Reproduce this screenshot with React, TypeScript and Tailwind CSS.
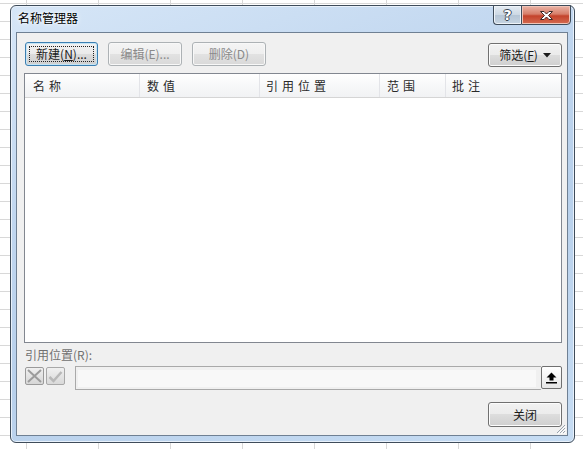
import React from "react";

const F = "font-['Microsoft_YaHei','Noto_Sans_CJK_SC',sans-serif]";

function Btn({
  children,
  w,
  h = "h-[24px]",
  kind = "normal",
}: {
  children: React.ReactNode;
  w: string;
  h?: string;
  kind?: "normal" | "default" | "disabled";
}) {
  const border =
    kind === "default"
      ? "border-[#3c7fb1] shadow-[inset_0_0_0_1px_#c4e5f6]"
      : kind === "disabled"
      ? "border-[#adb2b5] shadow-[inset_0_0_0_1px_#f8f8f8]"
      : "border-[#707070] shadow-[inset_0_0_0_1px_#fcfcfc]";
  const bg =
    kind === "default"
      ? "bg-[linear-gradient(to_bottom,#f2f2f2_0%,#eaeaea_50%,#dcdcdc_50%,#cfcfcf_100%)]"
      : kind === "disabled"
      ? "bg-[linear-gradient(to_bottom,#f4f4f4_0%,#efefef_50%,#e2e2e2_50%,#d9d9d9_100%)]"
      : "bg-[linear-gradient(to_bottom,#f2f2f2_0%,#ebebeb_50%,#dddddd_50%,#cfcfcf_100%)]";
  const text = kind === "disabled" ? "text-[#8a8a8a]" : "text-[#1a1a1a]";
  return (
    <div
      className={`${w} ${h} relative flex items-center justify-center rounded-[3px] border ${border} ${bg} ${text} text-[12px] leading-none`}
    >
      {kind === "default" && (
        <span className="absolute inset-[3px] border border-dotted border-[#222]" />
      )}
      <span className="relative">{children}</span>
    </div>
  );
}

export default function App() {
  return (
    <div
      className={`w-[583px] h-[449px] overflow-hidden bg-white bg-[linear-gradient(to_right,#d8d8d8_1px,transparent_1px),linear-gradient(to_bottom,#d8d8d8_1px,transparent_1px)] bg-size-[72px_18px] bg-position-[26px_3px] pt-[5px] pl-[10px] ${F}`}
    >
      {/* window */}
      <div className="w-[565px] h-[438px] rounded-[6px] border border-[#3f4c5a] bg-[linear-gradient(160deg,#d6e6f7_0%,#c0d6ef_35%,#b8d0eb_60%,#c6dcf3_100%)] shadow-[inset_0_0_0_1px_#e8f1fb] pl-[5px] pr-[6px] pb-[6px] flex flex-col">
        {/* title bar */}
        <div className="h-[26px] flex items-start justify-between">
          <div className="pl-[2px] pt-[4px] text-[12px] leading-[16px] text-black [text-shadow:0_0_6px_#ffffff,0_0_3px_#ffffff]">
            名称管理器
          </div>
          <div className="flex -mt-[1px] -mr-[3px]">
            <div className="w-[28px] h-[20px] rounded-bl-[4px] border border-[#3f4c5a] border-r-0 bg-[linear-gradient(to_bottom,#e4ebf2_0%,#ccd8e4_50%,#b5c5d5_50%,#c6d4e2_100%)] shadow-[inset_0_0_0_1px_#eef3f8] flex items-center justify-center">
              <span className="text-[14px] font-bold leading-none text-white [font-family:'DejaVu_Sans',sans-serif] [text-shadow:1px_0_0_#3a4654,-1px_0_0_#3a4654,0_1px_0_#3a4654,0_-1px_0_#3a4654]">
                ?
              </span>
            </div>
            <div className="w-[50px] h-[20px] rounded-br-[4px] border border-[#3f4c5a] bg-[linear-gradient(to_bottom,#eab5a8_0%,#d77e69_45%,#c4432b_55%,#d46b52_100%)] shadow-[inset_0_0_0_1px_#f0c4b8] flex items-center justify-center">
              <svg width="15" height="11" viewBox="0 0 15 11">
                <path
                  d="M1.5 1.5 H5 L7.5 4 L10 1.5 H13.5 L9.5 5.5 L13.5 9.5 H10 L7.5 7 L5 9.5 H1.5 L5.5 5.5 Z"
                  fill="#ffffff"
                  stroke="#3b2a28"
                  strokeWidth="1"
                  strokeLinejoin="round"
                />
              </svg>
            </div>
          </div>
        </div>

        {/* client area */}
        <div className="flex-1 relative border border-[#6f8093] bg-[#f0f0f0] flex flex-col pl-[7px] pr-[5px]">
          {/* buttons row */}
          <div className="mt-[9px] pl-[1px] flex items-start">
            <Btn w="w-[73px]" kind="default">
              新建(<u>N</u>)...
            </Btn>
            <div className="ml-[10px]">
              <Btn w="w-[74px]" kind="disabled">
                编辑(E)...
              </Btn>
            </div>
            <div className="ml-[10px]">
              <Btn w="w-[74px]" kind="disabled">
                删除(D)
              </Btn>
            </div>
            <div className="ml-auto mt-[1px]">
              <Btn w="w-[74px]">
                <span className="flex items-center gap-[5px]">
                  <span>
                    筛选(<u>F</u>)
                  </span>
                  <svg width="8" height="5" viewBox="0 0 8 5">
                    <path d="M0 0 H8 L4 4.5 Z" fill="#1a1a1a" />
                  </svg>
                </span>
              </Btn>
            </div>
          </div>

          {/* list */}
          <div className="mt-[6px] h-[270px] border border-[#828790] bg-white">
            <div className="h-[24px] flex border-b border-[#d5d5d5] bg-[linear-gradient(to_bottom,#ffffff_0%,#f7f8f9_50%,#f1f2f4_100%)] text-[12px] text-[#2a2a2a] tracking-[4px]">
              <div className="w-[115px] border-r border-[#e3e4e8] flex items-center pl-[8px]">名称</div>
              <div className="w-[120px] border-r border-[#e3e4e8] flex items-center pl-[7px]">数值</div>
              <div className="w-[120px] border-r border-[#e3e4e8] flex items-center pl-[6px]">引用位置</div>
              <div className="w-[66px] border-r border-[#e3e4e8] flex items-center pl-[7px]">范围</div>
              <div className="flex-1 flex items-center pl-[6px]">批注</div>
            </div>
          </div>

          {/* reference label */}
          <div className="mt-[4px] pl-[1px] h-[16px] text-[12px] leading-[16px] text-[#707070]">
            引用位置(R):
          </div>

          {/* reference row */}
          <div className="mt-[3px] h-[24px] flex items-start pl-[1px]">
            <div className="mt-[1px] w-[19px] h-[18px] rounded-[2px] border border-[#9a9a9a] bg-[linear-gradient(to_bottom,#f0f0f0,#d6d6d6)] flex items-center justify-center">
              <svg width="15" height="14" viewBox="0 0 15 14">
                <path d="M1 1 L14 13 M14 1 L1 13" stroke="#9c9c9c" strokeWidth="2" />
              </svg>
            </div>
            <div className="ml-[2px] mt-[1px] w-[19px] h-[18px] rounded-[2px] border border-[#a8a8a8] bg-[linear-gradient(to_bottom,#f0f0f0,#d9d9d9)] flex items-center justify-center">
              <svg width="15" height="13" viewBox="0 0 15 13">
                <path d="M1.5 7 L5.5 11 L13.5 2" stroke="#b8b8b8" strokeWidth="2.5" fill="none" />
              </svg>
            </div>
            <div className="ml-[10px] flex-1 h-[24px] flex items-stretch">
              <div className="flex-1 border border-r-0 border-[#a9a9a9] bg-[#f0f0f0] flex items-center pl-[2px] pr-[5px]">
                <div className="w-full h-[17px] bg-[#f8f8f8]" />
              </div>
              <div className="w-[21px] h-[23px] rounded-[2px] border border-[#707070] bg-[linear-gradient(to_bottom,#ffffff_0%,#f4f4f4_50%,#e6e6e6_100%)] flex items-center justify-center">
                <svg width="11" height="12" viewBox="0 0 11 12">
                  <path d="M5.5 0.5 L10.5 5.5 H7.5 V8.5 H3.5 V5.5 H0.5 Z" fill="#000" />
                  <rect x="0" y="10" width="11" height="1.5" fill="#000" />
                </svg>
              </div>
            </div>
          </div>

          {/* close button */}
          <div className="mt-[12px] flex justify-end">
            <Btn w="w-[74px]" h="h-[25px]">
              关闭
            </Btn>
          </div>

          {/* resize grip */}
          <svg className="absolute right-[1px] bottom-[1px]" width="11" height="11" viewBox="0 0 11 11">
            <path d="M10 2 L2 10 M10 5 L5 10 M10 8 L8 10" stroke="#9aa3ad" strokeWidth="1" />
            <path d="M11 3 L3 11 M11 6 L6 11 M11 9 L9 11" stroke="#ffffff" strokeWidth="1" />
          </svg>
        </div>
      </div>
    </div>
  );
}
